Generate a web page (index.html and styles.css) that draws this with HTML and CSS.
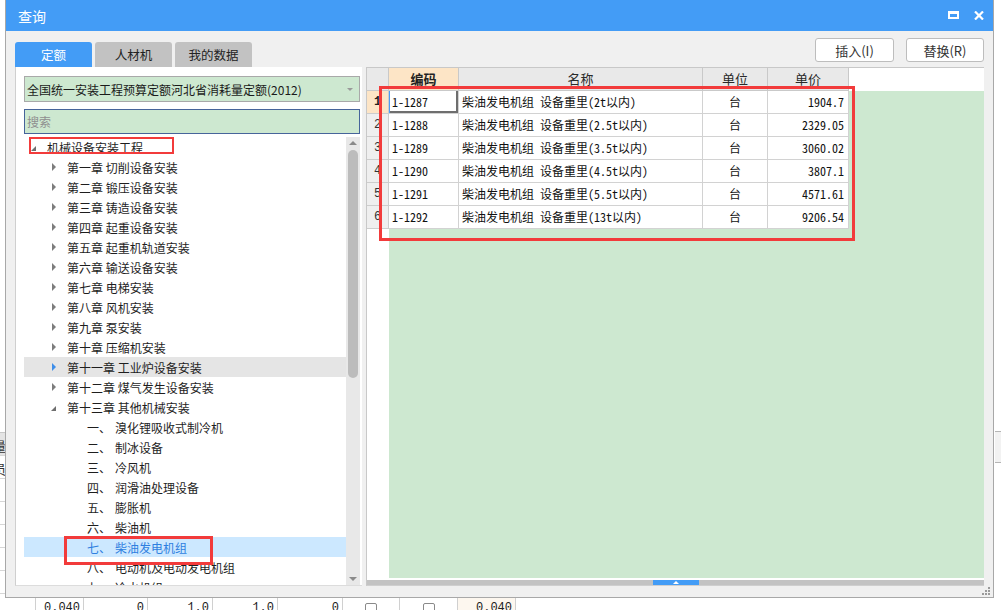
FILE: index.html
```html
<!DOCTYPE html>
<html lang="zh-CN">
<head>
<meta charset="utf-8">
<title>查询</title>
<link rel="stylesheet" href="styles.css">
</head>
<body>
<div class="bg-left">
  <div class="bl-row bl-head"><span>量</span></div>
  <div class="bl-row"><span>员</span></div>
  <div class="bl-row"></div>
  <div class="bl-row"></div>
  <div class="bl-row"></div>
  <div class="bl-row"></div>
  <div class="bl-row"></div>
</div>
<div class="bg-right"></div>
<div class="bg-bottom">
  <div class="bb-cell w36"></div>
  <div class="bb-cell w48">0.040</div>
  <div class="bb-cell w64">0</div>
  <div class="bb-cell w65">1.0</div>
  <div class="bb-cell w65">1.0</div>
  <div class="bb-cell w65">0</div>
  <div class="bb-cell w57 cb"><i></i></div>
  <div class="bb-cell w58 cb"><i></i></div>
  <div class="bb-cell w58 hl">0.040</div>
  <div class="bb-cell grow"></div>
</div>

<div class="dialog">
  <div class="titlebar">
    <span class="title">查询</span>
    <div class="winbtns">
      <svg width="11" height="8" viewBox="0 0 11 8"><rect x="1" y="1.5" width="9" height="5.5" fill="none" stroke="#fff" stroke-width="2"/><rect x="0" y="0" width="11" height="3" fill="#fff"/></svg>
      <svg width="10" height="9" viewBox="0 0 10 9"><path d="M1 0.5 L9 8.5 M9 0.5 L1 8.5" stroke="#fff" stroke-width="2.2"/></svg>
    </div>
  </div>
  <div class="toolbar">
    <div class="tabs">
      <div class="tab active">定额</div>
      <div class="tab">人材机</div>
      <div class="tab">我的数据</div>
    </div>
    <div class="actions">
      <button class="btn b1">插入(I)</button>
      <button class="btn b2">替换(R)</button>
    </div>
  </div>
  <div class="main">
    <div class="left">
      <div class="combo"><span>全国统一安装工程预算定额河北省消耗量定额(2012)</span><i class="caret"></i></div>
      <div class="search">搜索</div>
      <div class="treewrap">
        <div class="tree">
          <div class="node l0"><i class="tg open"></i><span>机械设备安装工程</span></div>
          <div class="node l1"><i class="tg closed"></i><span>第一章 切削设备安装</span></div>
          <div class="node l1"><i class="tg closed"></i><span>第二章 锻压设备安装</span></div>
          <div class="node l1"><i class="tg closed"></i><span>第三章 铸造设备安装</span></div>
          <div class="node l1"><i class="tg closed"></i><span>第四章 起重设备安装</span></div>
          <div class="node l1"><i class="tg closed"></i><span>第五章 起重机轨道安装</span></div>
          <div class="node l1"><i class="tg closed"></i><span>第六章 输送设备安装</span></div>
          <div class="node l1"><i class="tg closed"></i><span>第七章 电梯安装</span></div>
          <div class="node l1"><i class="tg closed"></i><span>第八章 风机安装</span></div>
          <div class="node l1"><i class="tg closed"></i><span>第九章 泵安装</span></div>
          <div class="node l1"><i class="tg closed"></i><span>第十章 压缩机安装</span></div>
          <div class="node l1 hover"><i class="tg closed blue"></i><span>第十一章 工业炉设备安装</span></div>
          <div class="node l1"><i class="tg closed"></i><span>第十二章 煤气发生设备安装</span></div>
          <div class="node l1"><i class="tg open"></i><span>第十三章 其他机械安装</span></div>
          <div class="node l2"><span class="no">一、</span><span>溴化锂吸收式制冷机</span></div>
          <div class="node l2"><span class="no">二、</span><span>制冰设备</span></div>
          <div class="node l2"><span class="no">三、</span><span>冷风机</span></div>
          <div class="node l2"><span class="no">四、</span><span>润滑油处理设备</span></div>
          <div class="node l2"><span class="no">五、</span><span>膨胀机</span></div>
          <div class="node l2"><span class="no">六、</span><span>柴油机</span></div>
          <div class="node l2 selected"><span class="no">七、</span><span>柴油发电机组</span></div>
          <div class="node l2"><span class="no">八、</span><span>电动机及电动发电机组</span></div>
          <div class="node l2"><span class="no">九、</span><span>冷水机组</span></div>
        </div>
        <div class="vscroll">
          <i class="arr up"></i>
          <div class="thumb"></div>
          <i class="arr down"></i>
        </div>
      </div>
    </div>
    <div class="right">
      <div class="grid">
        <div class="ghead">
          <div class="c rn"></div>
          <div class="c code cur">编码</div>
          <div class="c name">名称</div>
          <div class="c unit">单位</div>
          <div class="c price">单价</div>
        </div>
        <div class="gbody">
          <div class="rownums">
            <div class="c rn cur">1</div>
            <div class="c rn">2</div>
            <div class="c rn">3</div>
            <div class="c rn">4</div>
            <div class="c rn">5</div>
            <div class="c rn">6</div>
          </div>
          <div class="gdata">
            <div class="row"><div class="c code focus">1-1287</div><div class="c name">柴油发电机组 设备重里(2t以内)</div><div class="c unit">台</div><div class="c price">1904.7</div></div>
            <div class="row"><div class="c code">1-1288</div><div class="c name">柴油发电机组 设备重里(2.5t以内)</div><div class="c unit">台</div><div class="c price">2329.05</div></div>
            <div class="row"><div class="c code">1-1289</div><div class="c name">柴油发电机组 设备重里(3.5t以内)</div><div class="c unit">台</div><div class="c price">3060.02</div></div>
            <div class="row"><div class="c code">1-1290</div><div class="c name">柴油发电机组 设备重里(4.5t以内)</div><div class="c unit">台</div><div class="c price">3807.1</div></div>
            <div class="row"><div class="c code">1-1291</div><div class="c name">柴油发电机组 设备重里(5.5t以内)</div><div class="c unit">台</div><div class="c price">4571.61</div></div>
            <div class="row"><div class="c code">1-1292</div><div class="c name">柴油发电机组 设备重里(13t以内)</div><div class="c unit">台</div><div class="c price">9206.54</div></div>
          </div>
        </div>
      </div>
      <div class="hscroll"><span class="splitter"><i></i></span></div>
    </div>
  </div>
  <div class="statusbar">
    <svg width="9" height="9" viewBox="0 0 9 9" fill="#9a9a9a"><rect x="6" y="0" width="2" height="2"/><rect x="3" y="3" width="2" height="2"/><rect x="6" y="3" width="2" height="2"/><rect x="0" y="6" width="2" height="2"/><rect x="3" y="6" width="2" height="2"/><rect x="6" y="6" width="2" height="2"/></svg>
  </div>
</div>

<div class="mark m1"></div>
<div class="mark m2"></div>
<div class="mark m3"></div>
</body>
</html>
```
FILE: styles.css
```css
* { box-sizing: border-box; }
html, body { margin: 0; padding: 0; }
body {
  position: relative;
  width: 1001px;
  height: 610px;
  overflow: hidden;
  background: #ffffff;
  font-family: "Noto Sans CJK SC", "Microsoft YaHei", sans-serif;
  font-size: 12px;
  color: #1e1e1e;
}

/* background application behind the dialog */
.bg-left {
  position: absolute;
  left: 0;
  top: 432px;
  width: 5px;
  height: 166px;
  border-top: 1px solid #c8c8c8;
  overflow: hidden;
}
.bl-row {
  height: 23px;
  border-bottom: 1px solid #d6d6d6;
  position: relative;
  overflow: hidden;
}
.bl-row span {
  position: absolute;
  right: -1px;
  top: 3px;
  font-size: 13px;
  color: #333;
}
.bl-head { background: #e4e4e4; }
.bg-right {
  position: absolute;
  left: 995px;
  top: 431px;
  width: 6px;
  height: 32px;
  background: #f2f2f2;
  border-top: 1px solid #b5b5b5;
  border-bottom: 1px solid #b5b5b5;
}
.bg-bottom {
  position: absolute;
  left: 0;
  top: 598px;
  width: 1001px;
  height: 12px;
  display: flex;
  overflow: hidden;
  background: #fff;
}
.bb-cell {
  height: 12px;
  border-right: 1px solid #d0d0d0;
  text-align: right;
  padding: 2px 3px 0 0;
  font-family: "Liberation Mono", monospace;
  font-size: 12px;
  line-height: 16px;
  color: #222;
}
.w36 { width: 36px; }
.w48 { width: 48px; }
.w64 { width: 64px; }
.w65 { width: 65px; }
.w57 { width: 57px; }
.w58 { width: 58px; }
.grow { flex: 1; border-right: none; }
.hl { background: #fdf7ef; }
.cb { display: flex; justify-content: center; padding: 5px 0 0 0; }
.cb i {
  display: block;
  width: 12px;
  height: 12px;
  border: 1px solid #8a8a8a;
  border-radius: 2px;
}

/* dialog window */
.dialog {
  position: absolute;
  left: 5px;
  top: 0;
  width: 989px;
  height: 598px;
  background: #f0f0f0;
  border: 1px solid #a8a8a8;
  border-top: none;
  display: flex;
  flex-direction: column;
}
.titlebar {
  height: 31px;
  background: #439cf6;
  display: flex;
  align-items: center;
  justify-content: space-between;
  padding: 0 9px 0 12px;
  flex: none;
}
.title {
  color: #fff;
  font-size: 14px;
}
.winbtns {
  display: flex;
  align-items: center;
  gap: 15px;
  margin-top: -1px;
}
.toolbar {
  height: 36px;
  flex: none;
  display: flex;
  justify-content: space-between;
  padding: 0 9px;
}
.tabs {
  display: flex;
  align-items: flex-end;
  gap: 3px;
}
.tab {
  width: 77px;
  height: 25px;
  background: #c2c2c2;
  border-radius: 3px 3px 0 0;
  text-align: center;
  line-height: 25px;
  font-size: 12.5px;
  color: #222;
}
.tab.active {
  background: #439cf6;
  color: #fff;
}
.actions {
  display: flex;
  gap: 12px;
  padding-top: 7px;
}
.btn {
  height: 24px;
  background: #fff;
  border: 1px solid #bdbdbd;
  border-radius: 3px;
  font-family: inherit;
  font-size: 13px;
  color: #333;
  padding: 0;
}
.b1 { width: 79px; }
.b2 { width: 78px; }

.main {
  height: 519px;
  flex: none;
  display: flex;
  gap: 4px;
  padding: 0 9px;
}
.left {
  width: 347px;
  background: #fff;
  border-left: 1px solid #cfcfcf;
  border-bottom: 1px solid #dcdcdc;
  padding: 9px 2px 0 8px;
  display: flex;
  flex-direction: column;
}
.combo {
  height: 26px;
  flex: none;
  background: #cde8d0;
  border: 1px solid #a9a9a9;
  display: flex;
  align-items: center;
  justify-content: space-between;
  padding: 0 6px 0 2px;
  font-size: 12px;
  color: #1a1a1a;
}
.caret {
  width: 0;
  height: 0;
  border-left: 3px solid transparent;
  border-right: 3px solid transparent;
  border-top: 3px solid #9a9a9a;
}
.search {
  height: 25px;
  flex: none;
  margin-top: 7px;
  background: #cde8d0;
  border: 1px solid #46649a;
  padding-left: 2px;
  line-height: 23px;
  color: #8f8f8f;
  font-size: 12px;
}
.treewrap {
  margin-top: 3px;
  height: 448px;
  display: flex;
  overflow: hidden;
}
.tree {
  flex: 1;
  overflow: hidden;
}
.node {
  height: 20px;
  display: flex;
  align-items: center;
  white-space: nowrap;
  color: #1e1e1e;
}
.node.l0 { padding-left: 7px; }
.node.l1 { padding-left: 27px; }
.node.l2 { padding-left: 63px; }
.node.hover { background: #e5e5e5; }
.node.selected { background: #cce8ff; color: #2f7fe0; }
.tg {
  width: 16px;
  height: 20px;
  flex: none;
  position: relative;
}
.tg.closed::before {
  content: "";
  position: absolute;
  left: 1px;
  top: 6px;
  border-top: 4px solid transparent;
  border-bottom: 4px solid transparent;
  border-left: 4px solid #7d7d7d;
}
.tg.closed.blue::before { border-left-color: #3e8ee9; }
.tg.open::before {
  content: "";
  position: absolute;
  left: 0;
  top: 9px;
  border-left: 5px solid transparent;
  border-bottom: 5px solid #6e6e6e;
}
.no { width: 28px; flex: none; }

.vscroll {
  width: 14px;
  flex: none;
  background: #e8e8e8;
  position: relative;
}
.thumb {
  position: absolute;
  left: 2px;
  top: 13px;
  width: 10px;
  height: 228px;
  border-radius: 5px;
  background: #bcbcbc;
}
.arr {
  position: absolute;
  left: 3px;
  width: 0;
  height: 0;
  border-left: 4px solid transparent;
  border-right: 4px solid transparent;
}
.arr.up { top: 4px; border-bottom: 4px solid #8a8a8a; }
.arr.down { bottom: 4px; border-top: 4px solid #8a8a8a; }

.right {
  flex: 1;
  background: #fff;
  border-left: 1px solid #c8c8c8;
  border-top: 1px solid #c8c8c8;
  border-bottom: 1px solid #cfcfcf;
  display: flex;
  flex-direction: column;
}
.grid {
  height: 510px;
  flex: none;
  display: flex;
  flex-direction: column;
  overflow: hidden;
}
.ghead {
  height: 23px;
  flex: none;
  display: flex;
}
.ghead .c {
  background: #e9e9e9;
  border-right: 1px solid #c9c9c9;
  border-bottom: 1px solid #c9c9c9;
  text-align: center;
  line-height: 22px;
  font-size: 13px;
  color: #2a2a2a;
}
.ghead .c.cur { background: #fde5c6; font-weight: bold; color: #222; }
.c { height: 23px; flex: none; overflow: hidden; white-space: nowrap; }
.rn { width: 22px; }
.code { width: 70px; }
.name { width: 244px; }
.unit { width: 65px; }
.price { width: 81px; }
.gbody {
  flex: 1;
  display: flex;
}
.rownums { width: 22px; flex: none; }
.rownums .c {
  background: #efefef;
  border-right: 1px solid #cdcdcd;
  border-bottom: 1px solid #cdcdcd;
  text-align: center;
  line-height: 22px;
  font-family: "Liberation Mono", monospace;
  font-size: 12px;
  color: #333;
}
.rownums .c.cur { background: #fde5c6; font-weight: bold; color: #222; }
.gdata {
  flex: 1;
  background: #cde8d0;
}
.row {
  display: flex;
  width: 460px;
  background: #fff;
}
.row .c {
  border-right: 1px solid #d2d2d2;
  border-bottom: 1px solid #d2d2d2;
  line-height: 22px;
  font-family: "Noto Sans Mono CJK SC", "Noto Sans CJK SC", monospace;
  font-size: 12px;
  color: #111;
  padding: 0 3px;
}
.row .unit { text-align: center; }
.row .price { text-align: right; padding-right: 4px; }
.row .focus {
  box-shadow: inset 1px 0 0 #4a9cf5, inset -2px -2px 0 #6e6e6e;
}
.hscroll {
  height: 5px;
  margin-top: 2px;
  background: #c3c3c3;
  display: flex;
  justify-content: center;
  flex: none;
}
.splitter {
  width: 46px;
  height: 5px;
  background: #439cf6;
  display: flex;
  justify-content: center;
  align-items: center;
}
.splitter i {
  width: 0;
  height: 0;
  border-left: 3px solid transparent;
  border-right: 3px solid transparent;
  border-bottom: 3px solid #fff;
}
.statusbar {
  flex: 1;
  display: flex;
  justify-content: flex-end;
  align-items: flex-start;
  padding: 1px 2px 0 0;
}

/* red annotation rectangles */
.mark {
  position: absolute;
  border: 3px solid #f23b3b;
}
.m1 { left: 29px; top: 137px; width: 145px; height: 17px; border-width: 2px; }
.m2 { left: 64px; top: 536px; width: 149px; height: 29px; }
.m3 { left: 379px; top: 86px; width: 476px; height: 155px; }
```
